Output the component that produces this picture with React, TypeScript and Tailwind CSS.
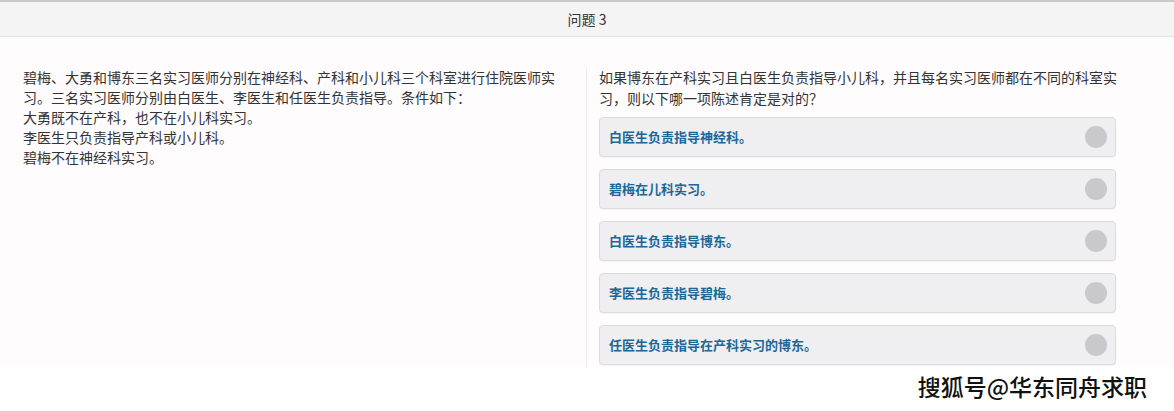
const premise = [
  '碧梅、大勇和博东三名实习医师分别在神经科、产科和小儿科三个科室进行住院医师实习。三名实习医师分别由白医生、李医生和任医生负责指导。条件如下：',
  '大勇既不在产科，也不在小儿科实习。',
  '李医生只负责指导产科或小儿科。',
  '碧梅不在神经科实习。',
];

const question =
  '如果博东在产科实习且白医生负责指导小儿科，并且每名实习医师都在不同的科室实习，则以下哪一项陈述肯定是对的？';

const options = [
  '白医生负责指导神经科。',
  '碧梅在儿科实习。',
  '白医生负责指导博东。',
  '李医生负责指导碧梅。',
  '任医生负责指导在产科实习的博东。',
];

const font = { fontFamily: '"Noto Sans CJK SC", "Noto Sans", sans-serif' };

function OptionRow({ label }: { label: string }) {
  return (
    <button
      type="button"
      className="flex h-[40px] w-full items-center justify-between rounded-[4px] border border-[#dcdcde] bg-[#efeff1] pl-[9px] pr-[8px] text-left shadow-[0_1px_1px_rgba(0,0,0,0.04)]"
    >
      <span className="text-[13px] font-bold text-[#1c6797]">{label}</span>
      <span className="h-[22px] w-[22px] rounded-full bg-[#c9c9cd]" />
    </button>
  );
}

export default function App() {
  return (
    <div className="relative h-[411px] w-[1174px] bg-white text-[#333]" style={font}>
      <header className="flex h-[37px] items-center justify-center border-t-2 border-b border-t-[#c9c9cb] border-b-[#e2e2e4] bg-[#f4f4f5] text-[14px]">
        问题 3
      </header>

      <main className="flex h-[330px] bg-[#fefcfd] pt-[30px]">
        <section className="w-[586px] shrink-0 pl-[23px] pr-[20px] text-[14px] leading-[20px]">
          {premise.map((line) => (
            <p key={line}>{line}</p>
          ))}
        </section>

        <section className="flex w-[530px] flex-col border-l border-[#ececee] pl-[12px]">
          <p className="-mr-[6px] text-[14px] leading-[21px]">{question}</p>
          <div className="mt-[8px] flex flex-col gap-[12px]">
            {options.map((o) => (
              <OptionRow key={o} label={o} />
            ))}
          </div>
        </section>
      </main>

      <div
        className="absolute bottom-[8px] right-[27px] text-[23px] font-medium text-[#111]"
        style={{ textShadow: '1px 1px 0 #fff, -1px -1px 0 #fff, 1px -1px 0 #fff, -1px 1px 0 #fff' }}
      >
        搜狐号@华东同舟求职
      </div>
    </div>
  );
}
